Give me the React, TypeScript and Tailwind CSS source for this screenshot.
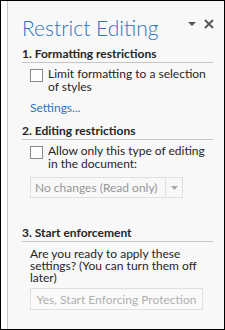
export default function App() {
  return (
    <div className="w-[225px] h-[330px] border border-black bg-white flex font-['Lato',sans-serif] text-[12px] text-[#262626]">
      <div className="w-[6px] shrink-0 bg-white" />
      <div className="w-px shrink-0 bg-[#c6c6c6]" />
      <div className="flex-1 bg-[#f8f8f8] pl-[14px] pr-[11px] pt-[11px]">
        <div className="flex items-start justify-between">
          <h1 className="mt-[3px] text-[21px] leading-[26px] font-light text-[#2e74c0]">Restrict Editing</h1>
          <div className="flex items-center gap-[8px] pt-[7px] mr-[-1px]">
            <svg width="8" height="4" viewBox="0 0 8 4">
              <path d="M0 0 H8 L4 4 Z" fill="#555" />
            </svg>
            <svg width="10" height="10" viewBox="0 0 10 10">
              <path d="M1 1 L9 9 M9 1 L1 9" stroke="#555" strokeWidth="1.8" />
            </svg>
          </div>
        </div>

        <h2 className="mt-[5px] font-bold leading-[15px] pb-[1px] border-b border-[#c6c6c6]">1. Formatting restrictions</h2>
        <label className="mt-[5px] ml-[8px] flex gap-[5px] leading-[12.5px]">
          <span className="mt-[1px] w-[13px] h-[13px] shrink-0 border border-[#8a8a8a] bg-white" />
          <span>Limit formatting to a selection of styles</span>
        </label>
        <div className="mt-[8px] ml-[8px] leading-[13px] text-[#2e74c0]">Settings...</div>

        <h2 className="mt-[9px] font-bold leading-[15px] pb-[1px] border-b border-[#c6c6c6]">2. Editing restrictions</h2>
        <label className="mt-[5px] ml-[8px] flex gap-[5px] leading-[12.5px]">
          <span className="mt-[1px] w-[13px] h-[13px] shrink-0 border border-[#8a8a8a] bg-white" />
          <span>Allow only this type of editing in the document:</span>
        </label>
        <div className="mt-[7px] ml-[8px] w-[153px] h-[21px] border border-[#e0e0e0] bg-[#f8f8f8] flex items-center text-[#969696]">
          <span className="flex-1 pl-[4px] leading-[15px]">No changes (Read only)</span>
          <span className="w-px h-[19px] bg-[#e0e0e0]" />
          <span className="w-[16px] flex justify-center">
            <svg width="7" height="4" viewBox="0 0 7 4">
              <path d="M0 0 H7 L3.5 4 Z" fill="#a6a6a6" />
            </svg>
          </span>
        </div>

        <h2 className="mt-[27px] font-bold leading-[15px] pb-[1px] border-b border-[#c6c6c6]">3. Start enforcement</h2>
        <p className="mt-[6px] ml-[8px] pr-[6px] leading-[12px]">Are you ready to apply these settings? (You can turn them off later)</p>
        <div className="mt-[4px] ml-[8px] w-[173px] h-[22px] border border-[#e0e0e0] bg-[#fafafa] flex items-center justify-center leading-[15px] text-[#b0b0b0]">
          Yes, Start Enforcing Protection
        </div>
      </div>
    </div>
  );
}
